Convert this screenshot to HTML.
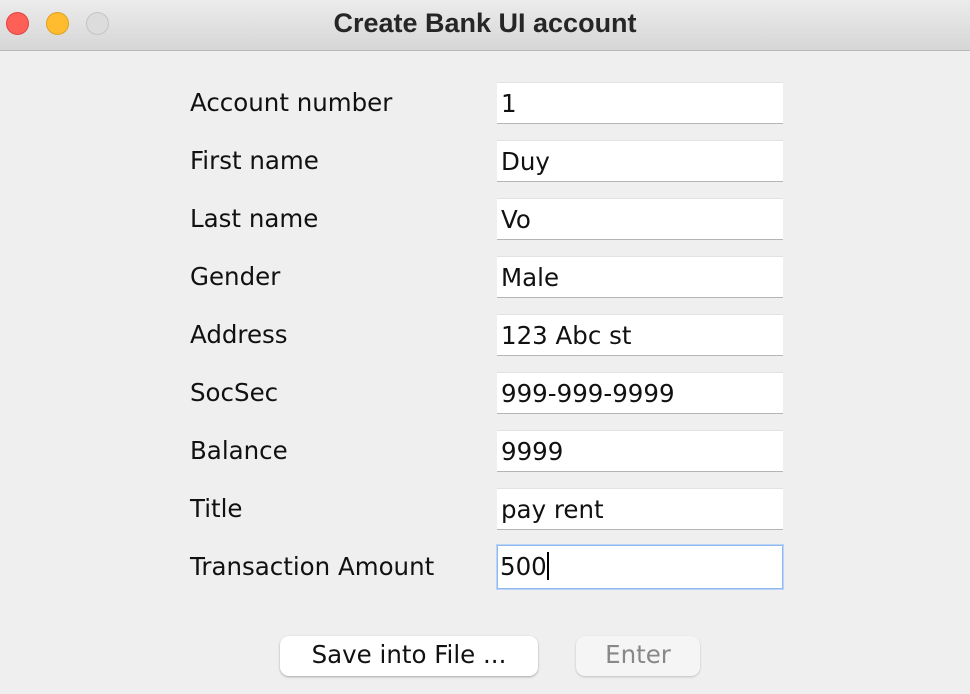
<!DOCTYPE html>
<html><head><style>
body{margin:0;width:970px;height:694px;background:#efefef;font-family:"DejaVu Sans",sans-serif;position:relative;overflow:hidden}
.tb{position:absolute;left:0;top:0;width:970px;height:50px;background:linear-gradient(#ececec,#d6d6d6);border-bottom:1px solid #b9b9b9}
.tb .t{position:absolute;left:0;right:0;top:8px;text-align:center;font-weight:bold;font-size:27px;color:#262626;font-family:"Liberation Sans",sans-serif}
.c{position:absolute;top:12px;width:23px;height:23px;border-radius:50%}
.l{position:absolute;left:190px;font-size:24.5px;color:#111}
.f{position:absolute;left:497px;width:286px;height:42px;background:#fff;box-sizing:border-box;border-bottom:1px solid #b5b5b5;border-top:1px solid #e2e2e2;font-size:24.5px;padding:6px 0 0 4px;color:#111}
.b{position:absolute;top:636px;height:40px;border-radius:9px;box-sizing:border-box;font-size:24.5px;text-align:center;line-height:38px}
</style></head><body>
<div class="tb"><div class="c" style="left:6px;background:#fe5f57;border:1px solid #e0443e;box-sizing:border-box"></div><div class="c" style="left:46px;background:#febc2e;border:1px solid #dea123;box-sizing:border-box"></div><div class="c" style="left:86px;background:#dcdcdc;border:1px solid #c4c4c4;box-sizing:border-box"></div><div class="t">Create Bank UI account</div></div>
<div class="l" style="top:88px">Account number</div><div class="f" style="top:82px">1</div>
<div class="l" style="top:146px">First name</div><div class="f" style="top:140px">Duy</div>
<div class="l" style="top:204px">Last name</div><div class="f" style="top:198px">Vo</div>
<div class="l" style="top:262px">Gender</div><div class="f" style="top:256px">Male</div>
<div class="l" style="top:320px">Address</div><div class="f" style="top:314px">123 Abc st</div>
<div class="l" style="top:378px">SocSec</div><div class="f" style="top:372px">999-999-9999</div>
<div class="l" style="top:436px">Balance</div><div class="f" style="top:430px">9999</div>
<div class="l" style="top:494px">Title</div><div class="f" style="top:488px">pay rent</div>
<div class="l" style="top:552px">Transaction Amount</div><div class="f" style="top:545px;height:44px;border:1px solid #8fb9ee;box-shadow:0 0 0 1px #b9d4f5;padding-top:6px;padding-left:2px">500<span style="display:inline-block;width:2px;height:28px;background:#000;vertical-align:-5px"></span></div>
<div class="b" style="left:280px;width:258px;background:#fff;box-shadow:0 1px 2px rgba(0,0,0,.3);color:#111">Save into File ...</div>
<div class="b" style="left:576px;width:124px;background:#f5f5f5;box-shadow:0 1px 2px rgba(0,0,0,.2);color:#888">Enter</div>
</body></html>
